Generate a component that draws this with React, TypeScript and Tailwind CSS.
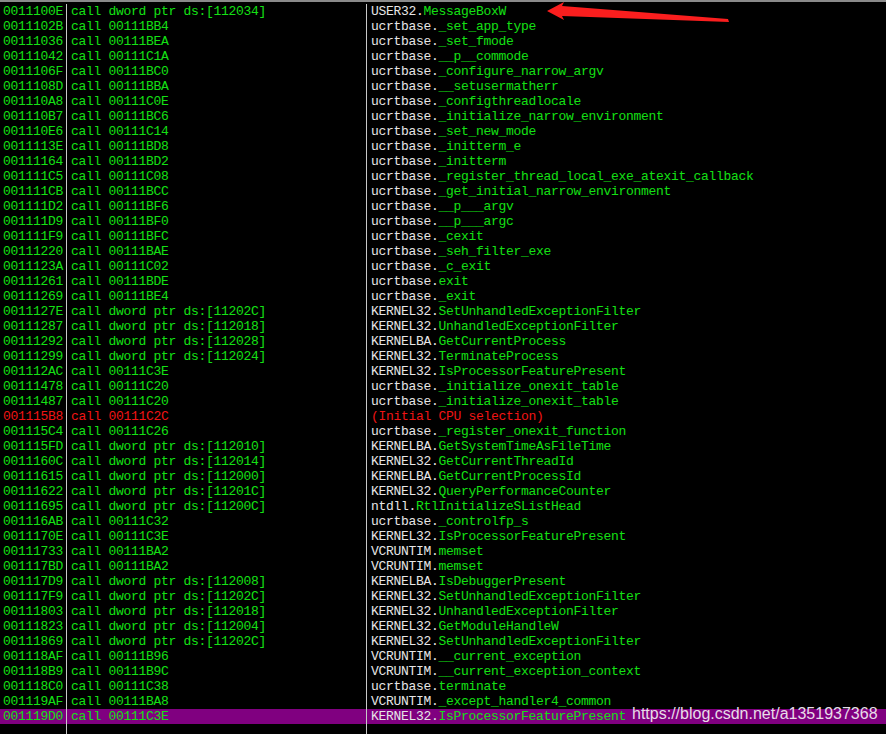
import React from "react";

type Row = {
  addr: string;
  ins: string;
  mod?: string;
  fn: string;
  red?: boolean;
};

const d = (n: string) => `call dword ptr ds:[${n}]`;
const c = (n: string) => `call ${n}`;

const rows: Row[] = [
  { addr: "0011100E", ins: d("112034"), mod: "USER32.", fn: "MessageBoxW" },
  { addr: "0011102B", ins: c("00111BB4"), mod: "ucrtbase.", fn: "_set_app_type" },
  { addr: "00111036", ins: c("00111BEA"), mod: "ucrtbase.", fn: "_set_fmode" },
  { addr: "00111042", ins: c("00111C1A"), mod: "ucrtbase.", fn: "__p__commode" },
  { addr: "0011106F", ins: c("00111BC0"), mod: "ucrtbase.", fn: "_configure_narrow_argv" },
  { addr: "0011108D", ins: c("00111BBA"), mod: "ucrtbase.", fn: "__setusermatherr" },
  { addr: "001110A8", ins: c("00111C0E"), mod: "ucrtbase.", fn: "_configthreadlocale" },
  { addr: "001110B7", ins: c("00111BC6"), mod: "ucrtbase.", fn: "_initialize_narrow_environment" },
  { addr: "001110E6", ins: c("00111C14"), mod: "ucrtbase.", fn: "_set_new_mode" },
  { addr: "0011113E", ins: c("00111BD8"), mod: "ucrtbase.", fn: "_initterm_e" },
  { addr: "00111164", ins: c("00111BD2"), mod: "ucrtbase.", fn: "_initterm" },
  { addr: "001111C5", ins: c("00111C08"), mod: "ucrtbase.", fn: "_register_thread_local_exe_atexit_callback" },
  { addr: "001111CB", ins: c("00111BCC"), mod: "ucrtbase.", fn: "_get_initial_narrow_environment" },
  { addr: "001111D2", ins: c("00111BF6"), mod: "ucrtbase.", fn: "__p___argv" },
  { addr: "001111D9", ins: c("00111BF0"), mod: "ucrtbase.", fn: "__p___argc" },
  { addr: "001111F9", ins: c("00111BFC"), mod: "ucrtbase.", fn: "_cexit" },
  { addr: "00111220", ins: c("00111BAE"), mod: "ucrtbase.", fn: "_seh_filter_exe" },
  { addr: "0011123A", ins: c("00111C02"), mod: "ucrtbase.", fn: "_c_exit" },
  { addr: "00111261", ins: c("00111BDE"), mod: "ucrtbase.", fn: "exit" },
  { addr: "00111269", ins: c("00111BE4"), mod: "ucrtbase.", fn: "_exit" },
  { addr: "0011127E", ins: d("11202C"), mod: "KERNEL32.", fn: "SetUnhandledExceptionFilter" },
  { addr: "00111287", ins: d("112018"), mod: "KERNEL32.", fn: "UnhandledExceptionFilter" },
  { addr: "00111292", ins: d("112028"), mod: "KERNELBA.", fn: "GetCurrentProcess" },
  { addr: "00111299", ins: d("112024"), mod: "KERNEL32.", fn: "TerminateProcess" },
  { addr: "001112AC", ins: c("00111C3E"), mod: "KERNEL32.", fn: "IsProcessorFeaturePresent" },
  { addr: "00111478", ins: c("00111C20"), mod: "ucrtbase.", fn: "_initialize_onexit_table" },
  { addr: "00111487", ins: c("00111C20"), mod: "ucrtbase.", fn: "_initialize_onexit_table" },
  { addr: "001115B8", ins: c("00111C2C"), fn: "(Initial CPU selection)", red: true },
  { addr: "001115C4", ins: c("00111C26"), mod: "ucrtbase.", fn: "_register_onexit_function" },
  { addr: "001115FD", ins: d("112010"), mod: "KERNELBA.", fn: "GetSystemTimeAsFileTime" },
  { addr: "0011160C", ins: d("112014"), mod: "KERNEL32.", fn: "GetCurrentThreadId" },
  { addr: "00111615", ins: d("112000"), mod: "KERNELBA.", fn: "GetCurrentProcessId" },
  { addr: "00111622", ins: d("11201C"), mod: "KERNEL32.", fn: "QueryPerformanceCounter" },
  { addr: "00111695", ins: d("11200C"), mod: "ntdll.", fn: "RtlInitializeSListHead" },
  { addr: "001116AB", ins: c("00111C32"), mod: "ucrtbase.", fn: "_controlfp_s" },
  { addr: "0011170E", ins: c("00111C3E"), mod: "KERNEL32.", fn: "IsProcessorFeaturePresent" },
  { addr: "00111733", ins: c("00111BA2"), mod: "VCRUNTIM.", fn: "memset" },
  { addr: "001117BD", ins: c("00111BA2"), mod: "VCRUNTIM.", fn: "memset" },
  { addr: "001117D9", ins: d("112008"), mod: "KERNELBA.", fn: "IsDebuggerPresent" },
  { addr: "001117F9", ins: d("11202C"), mod: "KERNEL32.", fn: "SetUnhandledExceptionFilter" },
  { addr: "00111803", ins: d("112018"), mod: "KERNEL32.", fn: "UnhandledExceptionFilter" },
  { addr: "00111823", ins: d("112004"), mod: "KERNEL32.", fn: "GetModuleHandleW" },
  { addr: "00111869", ins: d("11202C"), mod: "KERNEL32.", fn: "SetUnhandledExceptionFilter" },
  { addr: "001118AF", ins: c("00111B96"), mod: "VCRUNTIM.", fn: "__current_exception" },
  { addr: "001118B9", ins: c("00111B9C"), mod: "VCRUNTIM.", fn: "__current_exception_context" },
  { addr: "001118C0", ins: c("00111C38"), mod: "ucrtbase.", fn: "terminate" },
  { addr: "001119AF", ins: c("00111BA8"), mod: "VCRUNTIM.", fn: "_except_handler4_common" },
  { addr: "001119D0", ins: c("00111C3E"), mod: "KERNEL32.", fn: "IsProcessorFeaturePresent" },
];

const SELECTED = rows.length - 1;

function cell(i: number) {
  return i === SELECTED
    ? "h-[15px] whitespace-pre bg-[#800080]"
    : "h-[15px] whitespace-pre";
}

export default function App() {
  return (
    <div
      className="relative w-[886px] h-[734px] overflow-hidden bg-black text-[13px] leading-[15px] tracking-[-0.3px] text-[#14e014]"
      style={{ fontFamily: '"Liberation Mono", "DejaVu Sans Mono", monospace' }}
    >
      {/* top rule */}
      <div className="h-[2px] bg-[#8a8a8a]" />
      <div className="flex h-[732px] pt-[2px]">
        {/* address column */}
        <div className="w-[67px] shrink-0 border-r border-[#c8c8c8]">
          {rows.map((r, i) => (
            <div key={r.addr} className={`${cell(i)} pl-[3px] ${r.red ? "text-[#f01414]" : ""}`}>
              {r.addr}
            </div>
          ))}
        </div>

        {/* disassembly column */}
        <div className="w-[300px] shrink-0 border-r border-[#c8c8c8]">
          {rows.map((r, i) => (
            <div key={r.addr} className={`${cell(i)} pl-[4px] ${r.red ? "text-[#f01414]" : ""}`}>
              {r.ins}
            </div>
          ))}
        </div>

        {/* comment column */}
        <div className="flex-1">
          {rows.map((r, i) => (
            <div key={r.addr} className={`${cell(i)} pl-[4px]`}>
              {r.red ? (
                <span className="text-[#f01414]">{r.fn}</span>
              ) : (
                <>
                  <span className="text-[#e6e6e6]">{r.mod}</span>
                  {r.fn}
                </>
              )}
            </div>
          ))}
        </div>
      </div>

      {/* annotation arrow */}
      <svg className="absolute left-[540px] top-0" width="200" height="30" viewBox="0 0 200 30">
        <polygon
          points="7,11 24,2 22,6 188,19 189,22 22,16 24,20"
          fill="#fa1e1e"
        />
      </svg>

      {/* watermark */}
      <div
        className="absolute left-[632px] top-[705px] text-[16px] leading-[18px] tracking-normal text-[#e8dce8]"
        style={{ fontFamily: '"Liberation Sans", Arial, sans-serif' }}
      >
        https://blog.csdn.net/a1351937368
      </div>
    </div>
  );
}
